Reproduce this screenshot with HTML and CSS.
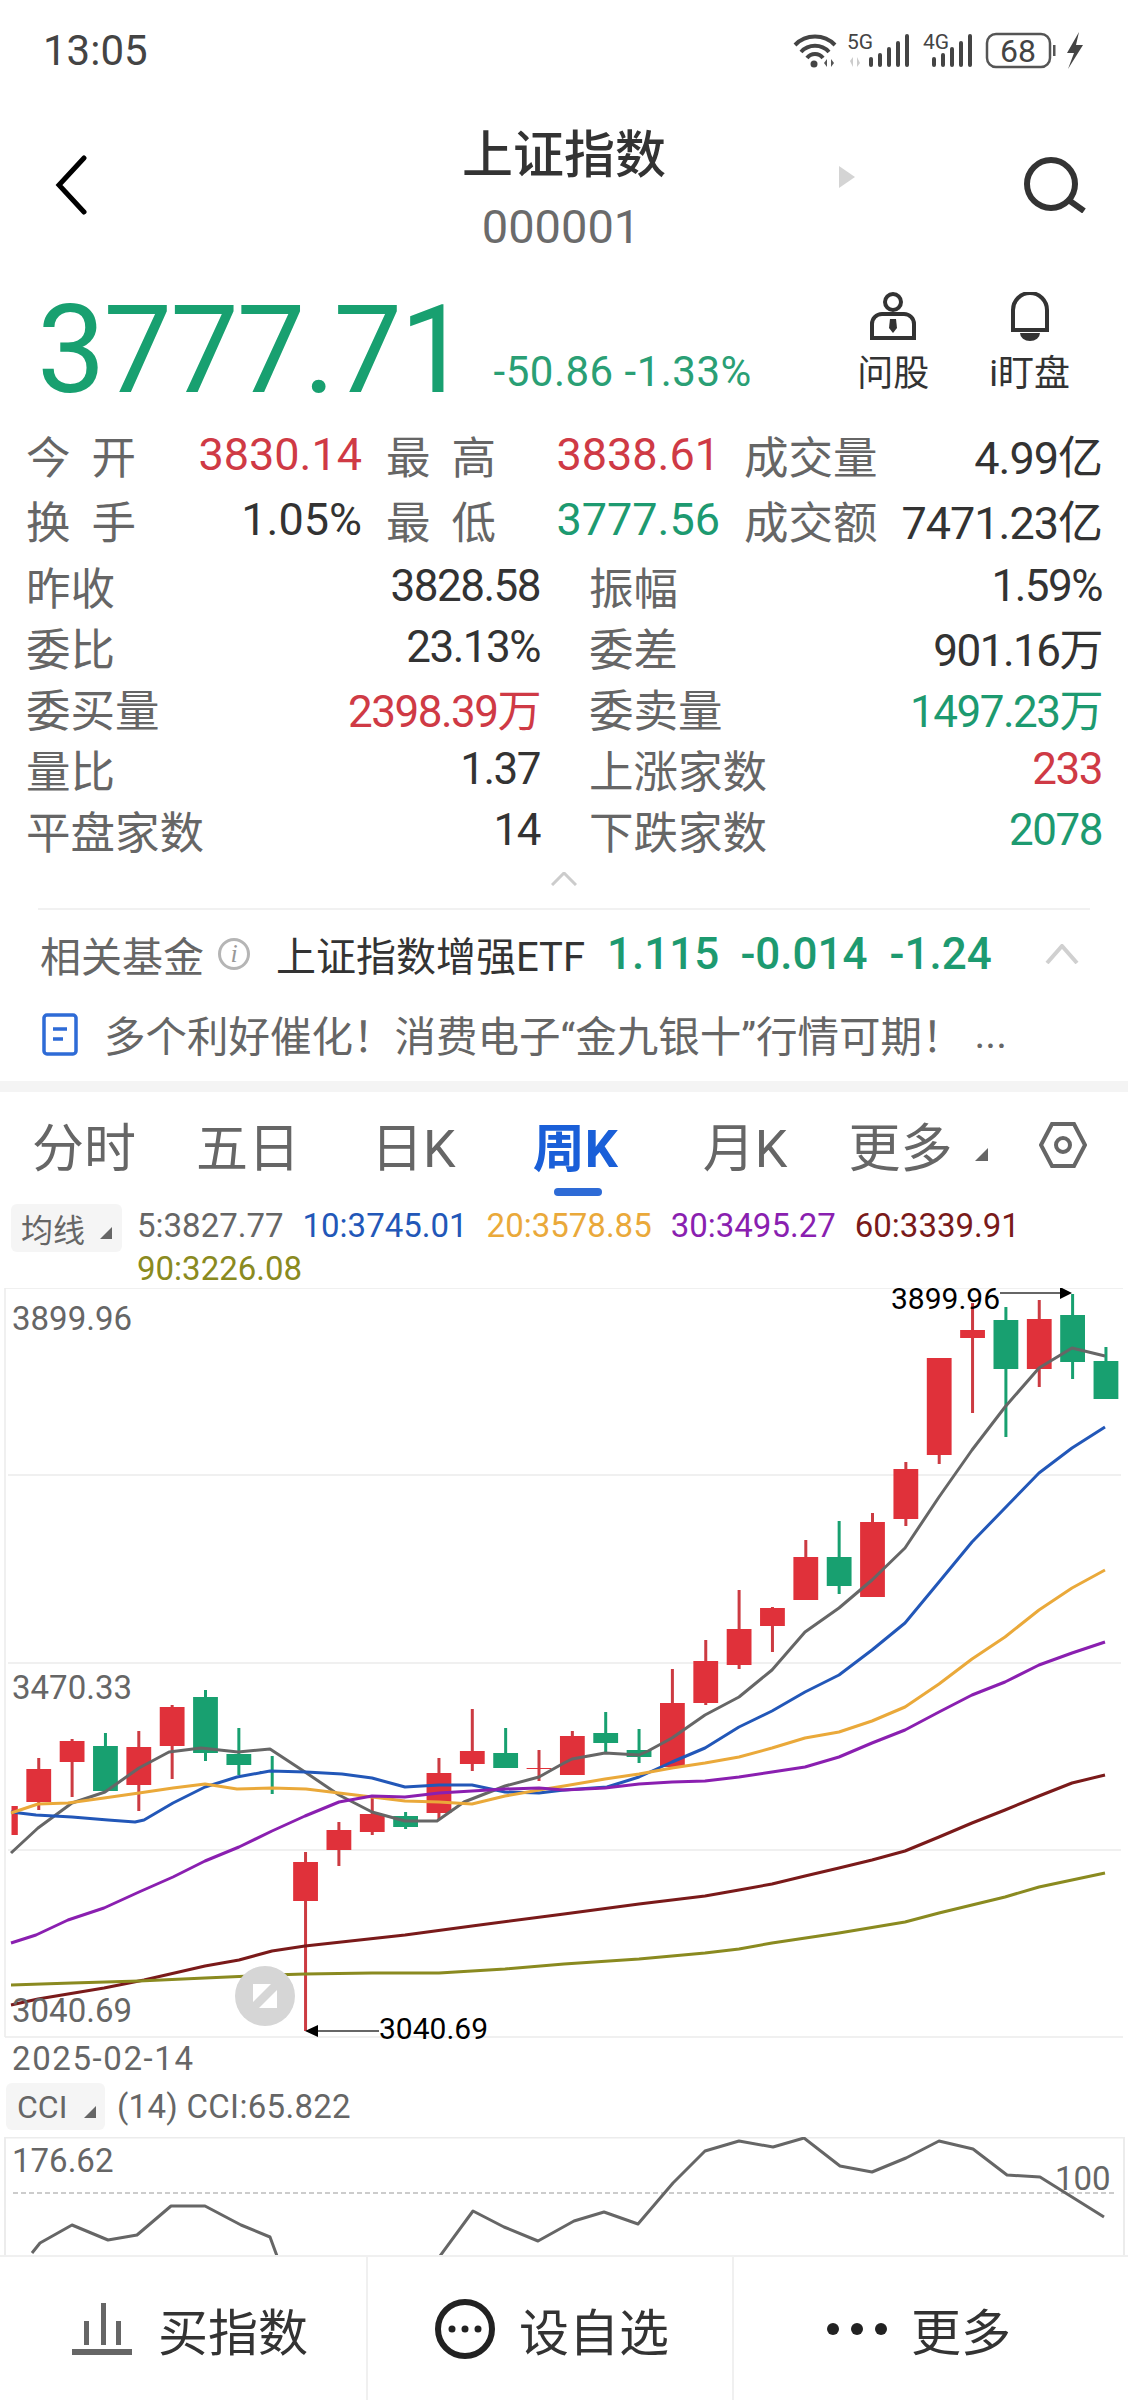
FILE: index.html
```html
<!DOCTYPE html>
<html lang="zh-CN">
<head>
    <meta charset="UTF-8">
    <meta name="viewport" content="width=device-width, initial-scale=1.0">
    <title>上证指数</title>
    <link rel="stylesheet" href="styles.css">
</head>
<body>
    <div class="status-bar">
        <span class="status-time">13:05</span>
        <svg class="status-icons" viewBox="795 30 292 38">
            <g fill="none" stroke="#444" stroke-width="4">
                <path d="M797 44a28 28 0 0 1 40 0"/>
                <path d="M803 51a19 19 0 0 1 28 0"/>
                <path d="M809 57a10 10 0 0 1 16 0"/>
            </g>
            <circle cx="816" cy="63" r="3.5" fill="#444"/>
            <path d="M829 66v-8l-3 4zM833 58v8l3-4z" fill="#555"/>
            <text class="net-label" x="849" y="48">5G</text>
            <path d="M855 66v-10l-3 4zM859 56v10l3-4z" fill="#ccc"/>
            <g fill="#444">
                <rect x="871" y="56" width="4" height="10" rx="2"/>
                <rect x="880" y="52" width="4" height="14" rx="2"/>
                <rect x="889" y="46" width="4" height="20" rx="2"/>
                <rect x="898" y="40" width="4" height="26" rx="2"/>
                <rect x="907" y="33" width="4" height="33" rx="2"/>
            </g>
            <text class="net-label" x="925" y="48">4G</text>
            <g fill="#444">
                <rect x="934" y="56" width="4" height="10" rx="2"/>
                <rect x="943" y="52" width="4" height="14" rx="2"/>
                <rect x="952" y="46" width="4" height="20" rx="2"/>
                <rect x="961" y="40" width="4" height="26" rx="2"/>
                <rect x="970" y="33" width="4" height="33" rx="2"/>
            </g>
            <rect x="989" y="33" width="63" height="33" rx="9" fill="none" stroke="#555" stroke-width="2.5"/>
            <text class="battery-label" x="1020" y="61" text-anchor="middle">68</text>
            <rect x="1055" y="44" width="2.5" height="11" fill="#555"/>
            <path d="M1081 31l-12 21h7l-6 16 15-24h-7z" fill="#444"/>
        </svg>
    </div>

    <div class="nav">
        <div class="nav-left">
            <svg class="icon-back" viewBox="0 0 34 60"><path d="M30 3L5 30l25 27"/></svg>
        </div>
        <div class="nav-title">
            <h1>上证指数</h1>
            <div class="nav-code">000001</div>
        </div>
        <div class="nav-right">
            <svg class="icon-next" viewBox="0 0 16 22"><path d="M0 0l16 11L0 22z"/></svg>
            <svg class="icon-search" viewBox="0 0 64 56"><circle cx="27" cy="27" r="24"/><path d="M46 44l14 10"/></svg>
        </div>
    </div>

    <div class="quote">
        <div class="quote-price">3777.71</div>
        <div class="quote-change">-50.86 -1.33%</div>
        <div class="quote-actions">
            <div class="action">
                <svg class="action-icon" viewBox="0 0 50 50">
                    <circle cx="25" cy="10" r="8"/>
                    <path d="M4 46V32a10 10 0 0 1 10-10h22a10 10 0 0 1 10 10v14z"/>
                    <path class="tie" d="M22 27h6l1 9-4 5-4-5z"/>
                </svg>
                <span>问股</span>
            </div>
            <div class="action">
                <svg class="action-icon" viewBox="0 0 50 50">
                    <path d="M8 38V18a17 17 0 0 1 34 0v20z"/>
                    <path class="tie" d="M15 41h20a10 8 0 0 1-20 0z"/>
                </svg>
                <span>i盯盘</span>
            </div>
        </div>
    </div>

    <div class="stats-top">
        <div class="stat"><span class="stat-label spaced"><i>今</i><i>开</i></span><span class="stat-value up">3830.14</span></div>
        <div class="stat"><span class="stat-label spaced"><i>最</i><i>高</i></span><span class="stat-value up">3838.61</span></div>
        <div class="stat"><span class="stat-label">成交量</span><span class="stat-value tight">4.99亿</span></div>
        <div class="stat"><span class="stat-label spaced"><i>换</i><i>手</i></span><span class="stat-value">1.05%</span></div>
        <div class="stat"><span class="stat-label spaced"><i>最</i><i>低</i></span><span class="stat-value down">3777.56</span></div>
        <div class="stat"><span class="stat-label">成交额</span><span class="stat-value tight">7471.23亿</span></div>
    </div>
    <div class="stats-list">
        <div class="stat"><span class="stat-label">昨收</span><span class="stat-value">3828.58</span></div>
        <div class="stat"><span class="stat-label">振幅</span><span class="stat-value">1.59%</span></div>
        <div class="stat"><span class="stat-label">委比</span><span class="stat-value">23.13%</span></div>
        <div class="stat"><span class="stat-label">委差</span><span class="stat-value">901.16万</span></div>
        <div class="stat"><span class="stat-label">委买量</span><span class="stat-value up">2398.39万</span></div>
        <div class="stat"><span class="stat-label">委卖量</span><span class="stat-value down">1497.23万</span></div>
        <div class="stat"><span class="stat-label">量比</span><span class="stat-value">1.37</span></div>
        <div class="stat"><span class="stat-label">上涨家数</span><span class="stat-value up">233</span></div>
        <div class="stat"><span class="stat-label">平盘家数</span><span class="stat-value">14</span></div>
        <div class="stat"><span class="stat-label">下跌家数</span><span class="stat-value down">2078</span></div>
    </div>

    <div class="collapse">
        <svg viewBox="0 0 26 14"><path d="M1 13L13 1l12 12"/></svg>
    </div>

    <div class="fund-row">
        <span class="fund-title">相关基金</span>
        <span class="fund-info">i</span>
        <span class="fund-name">上证指数增强ETF</span>
        <span class="fund-num fund-price">1.115</span>
        <span class="fund-num fund-diff">-0.014</span>
        <span class="fund-num fund-pct">-1.24</span>
        <svg class="fund-toggle" viewBox="0 0 34 20"><path d="M2 19L17 2l15 17"/></svg>
    </div>
    <div class="news-row">
        <svg class="news-icon" viewBox="0 0 36 43">
            <rect x="2" y="2" width="32" height="39" rx="3"/>
            <path d="M11 16h14M11 26h10"/>
        </svg>
        <span class="news-text">多个利好催化！消费电子“金九银十”行情可期！</span>
        <span class="news-more">...</span>
    </div>
    <div class="band"></div>

    <div class="tabs">
        <span class="tab tab-fs">分时</span>
        <span class="tab tab-wr">五日</span>
        <span class="tab tab-rk">日K</span>
        <span class="tab tab-zk active">周K</span>
        <span class="tab tab-yk">月K</span>
        <span class="tab tab-more">更多</span>
        <span class="corner tab-corner"></span>
        <svg class="tab-settings" viewBox="0 0 48 46">
            <path d="M13 2h22l11 21-11 21H13L2 23z"/>
            <circle cx="24" cy="23" r="7"/>
        </svg>
    </div>

    <div class="ma-row">
        <div class="picker ma-picker">均线<span class="corner"></span></div>
        <div class="ma-values">
            <span class="ma ma5">5:3827.77</span>
            <span class="ma ma10">10:3745.01</span>
            <span class="ma ma20">20:3578.85</span>
            <span class="ma ma30">30:3495.27</span>
            <span class="ma ma60">60:3339.91</span>
            <span class="ma ma90">90:3226.08</span>
        </div>
    </div>

    <div class="kline">
        <svg class="kline-svg" viewBox="0 1288 1128 750">
            <g class="grid">
                <path d="M5 1288v749M5 1288H1123M5 2037H1123"/>
                <path d="M8 1475H1121M8 1663H1121M8 1850H1121"/>
            </g>
            <g id="candles"></g>
            <g id="ma-lines"></g>
            <path class="callout-line" d="M1000 1293h60M318 2031h61"/>
            <path d="M1072 1293l-12-6v12zM305 2031l13-6v12z"/>
        </svg>
        <span class="axis-label axis-high">3899.96</span>
        <span class="axis-label axis-mid">3470.33</span>
        <span class="axis-label axis-low">3040.69</span>
        <span class="callout callout-high">3899.96</span>
        <span class="callout callout-low">3040.69</span>
        <svg class="expand" viewBox="0 0 60 60">
            <circle cx="30" cy="30" r="30"/>
            <path class="expand-mark" d="M18 18h18L18 36zM42 42H24l18-18z"/>
        </svg>
    </div>

    <div class="date-row">2025-02-14</div>

    <div class="cci-row">
        <div class="picker cci-picker">CCI<span class="corner"></span></div>
        <span class="cci-value">(14) CCI:65.822</span>
    </div>

    <div class="cci-panel">
        <svg class="cci-svg" viewBox="0 2137 1128 118">
            <path class="cci-frame" d="M5 2255V2137.5H1124V2255"/>
            <path class="cci-dash" d="M13 2193H1117"/>
            <polyline class="cci-line" points="32,2253 40,2243 72,2225 108,2240 137,2235 171,2206 205,2206 241,2225 270,2237 277,2256"/>
            <polyline class="cci-line" points="440,2256 473,2211 504,2227 538,2241 574,2221 604,2212 638,2224 673,2183 705,2151 739,2141 773,2147 804,2138 840,2166 872,2172 906,2158 939,2141 973,2149 1007,2175 1040,2177 1072,2197 1104,2217"/>
        </svg>
        <span class="axis-label cci-top">176.62</span>
        <span class="axis-label cci-hundred">100</span>
    </div>

    <div class="bottom-bar">
        <div class="bottom-item item-buy">
            <svg class="bottom-icon" viewBox="0 0 60 56">
                <path class="bar-fill" d="M12 20h5v24h-5zM29 2h5v42h-5zM44 20h5v24h-5zM0 48h60v6H0z"/>
            </svg>
            <span>买指数</span>
        </div>
        <div class="bottom-item item-watch">
            <svg class="bottom-icon" viewBox="0 0 60 60">
                <circle class="ring" cx="30" cy="30" r="27"/>
                <circle cx="17" cy="30" r="3.5"/><circle cx="30" cy="30" r="3.5"/><circle cx="43" cy="30" r="3.5"/>
            </svg>
            <span>设自选</span>
        </div>
        <div class="bottom-item item-more">
            <svg class="bottom-icon" viewBox="0 0 60 14">
                <circle cx="6" cy="7" r="6"/><circle cx="30" cy="7" r="6"/><circle cx="54" cy="7" r="6"/>
            </svg>
            <span>更多</span>
        </div>
    </div>

    <script src="chart.js"></script>
</body>
</html>
```

FILE: styles.css
```css
* {
    box-sizing: border-box;
}
body {
    margin: 0;
    width: 1128px;
    height: 2400px;
    overflow: hidden;
    background-color: #fff;
    color: #333;
    font-family: Roboto, "Noto Sans CJK SC", sans-serif;
}
i {
    font-style: normal;
}
svg {
    display: block;
}
.up {
    color: #cf3a45;
}
.down {
    color: #1d9a70;
}

/* status bar */
.status-bar {
    display: flex;
    justify-content: space-between;
    align-items: center;
    height: 100px;
    padding: 0 43px;
}
.status-time {
    font-size: 42px;
    color: #444;
}
.status-icons {
    width: 292px;
    height: 38px;
}
.net-label {
    font-size: 21px;
    fill: #444;
}
.battery-label {
    font-size: 32px;
    fill: #444;
}

/* nav */
.nav {
    display: grid;
    grid-template-columns: 1fr auto 1fr;
    height: 183px;
}
.nav-left {
    padding: 55px 0 0 54px;
}
.icon-back {
    width: 34px;
    height: 60px;
    fill: none;
    stroke: #000;
    stroke-width: 5;
    stroke-linecap: round;
}
.nav-title {
    text-align: center;
}
.nav-title h1 {
    margin: 26px 0 0;
    font-size: 51px;
    line-height: 60px;
    font-weight: 500;
    color: #333;
}
.nav-code {
    margin-top: 14px;
    padding-right: 6px;
    font-size: 47px;
    line-height: 54px;
    color: #6b6b6b;
}
.nav-right {
    display: flex;
    justify-content: space-between;
    padding: 57px 40px 0 173px;
}
.icon-next {
    width: 16px;
    height: 22px;
    margin-top: 9px;
    fill: #d4d4d4;
}
.icon-search {
    width: 64px;
    height: 56px;
    fill: none;
    stroke: #333;
    stroke-width: 6;
}

/* quote */
.quote {
    display: flex;
    align-items: flex-end;
    height: 137px;
    padding: 0 58px 0 37px;
}
.quote-price {
    font-size: 122px;
    line-height: 122px;
    letter-spacing: -2px;
    color: #18a070;
    margin-bottom: 8px;
}
.quote-change {
    margin: 0 0 25px 27px;
    font-size: 42px;
    line-height: 46px;
    letter-spacing: 0.5px;
    color: #2a9f75;
}
.quote-actions {
    display: flex;
    gap: 60px;
    margin-left: auto;
    margin-bottom: 24px;
}
.action {
    display: flex;
    flex-direction: column;
    align-items: center;
    font-size: 36px;
    line-height: 44px;
    color: #333;
}
.action-icon {
    width: 50px;
    height: 50px;
    margin-bottom: 10px;
    fill: none;
    stroke: #333;
    stroke-width: 4;
}
.action-icon .tie {
    fill: #333;
    stroke: none;
}

/* stats */
.stat {
    display: flex;
    justify-content: space-between;
    align-items: center;
}
.stat-label {
    color: #666;
    font-size: 44.5px;
}
.stat-label.spaced {
    display: flex;
    justify-content: space-between;
    width: 110px;
}
.stat-value {
    font-size: 45px;
}
.stat-value.tight {
    letter-spacing: -1px;
}
.stats-top {
    display: grid;
    grid-template-columns: 336px 334px 358px;
    column-gap: 24px;
    grid-auto-rows: 65px;
    margin-top: 2px;
    padding-left: 26px;
}
.stats-list {
    display: grid;
    grid-template-columns: 514px 513px;
    column-gap: 49px;
    grid-auto-rows: 61px;
    margin-top: 3px;
    padding-left: 26px;
}
.stats-list .stat-value {
    font-size: 44px;
    letter-spacing: -1.5px;
}

.collapse {
    display: flex;
    justify-content: center;
    height: 50px;
    padding-top: 12px;
    border-bottom: 2px solid #f1f1f1;
    margin: 0 38px;
}
.collapse svg {
    width: 26px;
    height: 14px;
    fill: none;
    stroke: #ccc;
    stroke-width: 3;
}

/* fund and news */
.fund-row {
    display: flex;
    align-items: center;
    height: 88px;
    padding: 0 49px 0 40px;
}
.fund-title {
    font-size: 41px;
    color: #666;
}
.fund-info {
    display: flex;
    justify-content: center;
    align-items: center;
    width: 32px;
    height: 32px;
    margin-left: 14px;
    border: 3px solid #b5b5b5;
    border-radius: 50%;
    font-family: "Liberation Serif", serif;
    font-style: italic;
    font-size: 26px;
    color: #999;
}
.fund-name {
    margin-left: 26px;
    font-size: 40px;
    color: #333;
}
.fund-num {
    font-size: 44px;
    font-weight: 500;
    color: #1d9a70;
}
.fund-price {
    margin-left: 22px;
}
.fund-diff {
    margin-left: 21px;
}
.fund-pct {
    margin-left: 22px;
}
.fund-toggle {
    width: 34px;
    height: 20px;
    margin-left: auto;
    fill: none;
    stroke: #d0d0d0;
    stroke-width: 4;
}
.news-row {
    display: flex;
    align-items: center;
    height: 72px;
    padding-left: 42px;
}
.news-icon {
    width: 36px;
    height: 43px;
    fill: none;
    stroke: #2e6bd6;
    stroke-width: 3.5;
}
.news-text {
    margin-left: 26px;
    font-size: 41.5px;
    color: #666;
    white-space: nowrap;
}
.news-more {
    margin-left: 11px;
    font-size: 41px;
    color: #666;
}
.band {
    height: 11px;
    margin-top: 11px;
    background-color: #f4f4f4;
}

/* period tabs */
.tabs {
    position: relative;
    height: 101px;
    display: flex;
    align-items: center;
    padding-top: 4px;
}
.tab {
    position: relative;
    font-size: 52px;
    color: #666;
}
.tab-fs {
    margin-left: 32px;
}
.tab-wr {
    margin-left: 60px;
}
.tab-rk {
    margin-left: 71px;
}
.tab-zk {
    margin-left: 77px;
}
.tab-yk {
    margin-left: 85px;
}
.tab-more {
    margin-left: 61px;
}
.tab.active {
    color: #1a5fd8;
    font-weight: 700;
}
.tab.active::after {
    content: "";
    position: absolute;
    left: 21px;
    bottom: -14px;
    width: 48px;
    height: 8px;
    border-radius: 4px;
    background-color: #2e6bd6;
}
.corner {
    display: inline-block;
    width: 0;
    height: 0;
    border-style: solid;
    border-width: 0 0 13px 13px;
    border-color: transparent transparent #666 transparent;
}
.tab-corner {
    margin: 20px 0 0 23px;
}
.tab-settings {
    width: 48px;
    height: 46px;
    margin-left: 51px;
    fill: none;
    stroke: #666;
    stroke-width: 4;
}

/* moving averages */
.ma-row {
    display: flex;
    align-items: flex-start;
    height: 95px;
    padding: 11px 0 0 11px;
}
.picker {
    display: flex;
    align-items: center;
    justify-content: space-between;
    background-color: #f5f5f5;
    border-radius: 6px;
    color: #666;
    font-size: 32px;
}
.picker .corner {
    border-width: 0 0 12px 12px;
    margin-top: 10px;
}
.ma-picker {
    width: 111px;
    height: 48px;
    padding: 0 10px;
}
.ma-values {
    display: flex;
    flex-wrap: wrap;
    column-gap: 19px;
    margin-left: 15px;
    width: 960px;
    font-size: 33px;
    line-height: 43px;
}
.ma5 { color: #666; }
.ma10 { color: #2257b8; }
.ma20 { color: #eaa93a; }
.ma30 { color: #8a1fb0; }
.ma60 { color: #7a1a1a; }
.ma90 { color: #8a8a20; }

/* kline chart */
.kline {
    position: relative;
    height: 750px;
}
.kline-svg {
    width: 1128px;
    height: 750px;
}
.grid path {
    fill: none;
    stroke: #ececec;
    stroke-width: 1.5;
}
.callout-line {
    stroke: #666;
    stroke-width: 2;
}
.axis-label {
    position: absolute;
    left: 12px;
    font-size: 33px;
    line-height: 34px;
    color: #666;
}
.axis-high { top: 14px; }
.axis-mid { top: 383px; }
.axis-low { top: 706px; }
.callout {
    position: absolute;
    font-size: 30px;
    line-height: 34px;
    color: #000;
}
.callout-high {
    left: 891px;
    top: -6px;
}
.callout-low {
    left: 379px;
    top: 724px;
}
.expand {
    position: absolute;
    left: 235px;
    top: 678px;
    width: 60px;
    height: 60px;
    fill: #d6d6d6;
}
.expand-mark {
    fill: #fff;
}

.date-row {
    height: 45px;
    padding: 2px 0 0 12px;
    font-size: 33px;
    line-height: 38px;
    letter-spacing: 1.6px;
    color: #666;
}
.cci-row {
    display: flex;
    align-items: flex-start;
    height: 54px;
    padding-left: 6px;
}
.cci-picker {
    width: 99px;
    height: 47px;
    padding: 0 9px 0 11px;
}
.cci-value {
    margin-left: 12px;
    font-size: 33px;
    line-height: 47px;
    letter-spacing: 0.3px;
    color: #666;
}
.cci-panel {
    position: relative;
    height: 118px;
}
.cci-svg {
    width: 1128px;
    height: 118px;
}
.cci-frame {
    fill: none;
    stroke: #ececec;
    stroke-width: 2;
}
.cci-dash {
    stroke: #ccc;
    stroke-width: 2;
    stroke-dasharray: 5 3;
}
.cci-line {
    fill: none;
    stroke: #666;
    stroke-width: 3;
    stroke-linejoin: round;
}
.cci-top {
    top: 7px;
    font-size: 33px;
}
.cci-hundred {
    left: 1055px;
    top: 25px;
}

/* bottom bar */
.bottom-bar {
    display: grid;
    grid-template-columns: 366px 366px 396px;
    height: 145px;
    background-color: #fff;
    border-top: 2px solid #f0f0f0;
}
.bottom-item {
    display: flex;
    align-items: center;
    gap: 24px;
    font-size: 50px;
    color: #333;
    border-left: 2px solid #f0f0f0;
}
.item-buy {
    gap: 26px;
    padding-left: 72px;
    border-left: none;
}
.item-watch {
    padding-left: 67px;
}
.item-more {
    padding-left: 93px;
}
.bottom-icon {
    width: 60px;
    height: auto;
    fill: #222;
}
.bar-fill {
    fill: #666;
}
.ring {
    fill: none;
    stroke: #222;
    stroke-width: 6;
}
```

FILE: chart.js
```js
const RED = '#e0313a';
const RED_WICK = '#cc3b42';
const GREEN = '#18a070';

// [color, bodyTop, bodyBottom, wickTop, wickBottom], one per week, page y coords
const candles = [
    ['r', 1806, 1835, 1800, 1835], ['r', 1769, 1802, 1758, 1810], ['r', 1741, 1762, 1739, 1797],
    ['g', 1746, 1791, 1733, 1791], ['r', 1747, 1785, 1731, 1811], ['r', 1707, 1746, 1705, 1779],
    ['g', 1697, 1753, 1690, 1761], ['g', 1754, 1765, 1728, 1775], ['g', 1771, 1772, 1756, 1794],
    ['r', 1862, 1901, 1852, 2031], ['r', 1830, 1850, 1822, 1866], ['r', 1814, 1832, 1797, 1835],
    ['g', 1816, 1827, 1812, 1829], ['r', 1773, 1813, 1758, 1820], ['r', 1751, 1764, 1709, 1771],
    ['g', 1753, 1768, 1728, 1768], ['r', 1768, 1769, 1750, 1781], ['r', 1736, 1775, 1731, 1775],
    ['g', 1733, 1743, 1712, 1753], ['g', 1750, 1757, 1729, 1763], ['r', 1703, 1767, 1669, 1767],
    ['r', 1661, 1703, 1640, 1705], ['r', 1629, 1665, 1590, 1669], ['r', 1608, 1626, 1607, 1652],
    ['r', 1557, 1600, 1540, 1600], ['g', 1557, 1586, 1521, 1594], ['r', 1522, 1597, 1513, 1597],
    ['r', 1469, 1519, 1462, 1526], ['r', 1358, 1455, 1358, 1464], ['r', 1330, 1338, 1303, 1413],
    ['g', 1320, 1369, 1307, 1437], ['r', 1319, 1369, 1300, 1387], ['g', 1315, 1362, 1294, 1379],
    ['g', 1361, 1399, 1347, 1361]
];

const lines = [
    ['#666666', '11,1853 38,1828 72,1803 105,1792 139,1768 169,1752 201,1748 238,1752 270,1749 305,1772 339,1795 372,1812 405,1821 437,1821 464,1802 505,1786 539,1777 564,1763 572,1759 605,1753 639,1755 648,1751 672,1738 705,1715 739,1697 772,1670 805,1632 839,1608 872,1580 905,1548 939,1497 972,1450 1005,1407 1039,1368 1072,1348 1105,1356'],
    ['#2257b8', '11,1812 36,1815 72,1817 108,1820 135,1822 144,1820 173,1803 205,1787 237,1777 270,1771 306,1772 342,1774 372,1778 405,1787 439,1785 472,1785 505,1792 539,1793 564,1790 607,1787 639,1777 672,1762 705,1748 739,1727 772,1711 805,1692 839,1675 872,1650 905,1623 939,1582 972,1542 1005,1508 1039,1473 1072,1448 1105,1427'],
    ['#eaa93a', '11,1813 38,1804 68,1803 104,1798 139,1793 173,1788 205,1784 237,1789 272,1788 306,1789 339,1793 372,1797 405,1801 439,1802 472,1804 505,1796 539,1790 564,1786 605,1779 639,1774 672,1768 705,1763 739,1757 772,1748 805,1738 839,1732 872,1721 905,1707 939,1684 972,1659 1005,1637 1039,1610 1072,1588 1105,1570'],
    ['#8a1fb0', '11,1943 36,1935 68,1920 104,1908 139,1892 173,1877 205,1861 239,1847 272,1831 305,1816 339,1802 372,1796 405,1797 439,1793 472,1791 505,1789 539,1788 564,1790 605,1788 639,1784 672,1782 705,1781 739,1777 772,1772 805,1767 839,1757 872,1743 905,1730 939,1712 972,1695 1005,1682 1039,1665 1072,1653 1105,1642'],
    ['#7a1a1a', '11,2005 38,1999 104,1988 144,1980 205,1966 239,1960 272,1951 305,1946 405,1935 472,1926 564,1914 639,1904 705,1896 739,1890 772,1884 805,1876 839,1868 872,1860 905,1851 939,1837 972,1823 1005,1810 1039,1796 1072,1783 1105,1775'],
    ['#8a8a20', '11,1985 72,1983 139,1981 205,1978 272,1975 305,1974 372,1973 439,1973 505,1969 564,1964 639,1959 705,1953 739,1949 772,1943 839,1933 905,1922 939,1913 1005,1897 1039,1887 1105,1873']
];

function drawCandles() {
    let html = '';
    candles.forEach((c, i) => {
        const x = 5.4 + i * 33.35;
        const left = Math.max(x - 12.4, 11.5);
        const body = c[0] === 'r' ? RED : GREEN;
        const wick = c[0] === 'r' ? RED_WICK : GREEN;
        if (i > 0) {
            html += `<rect x="${x - 1.5}" y="${c[3]}" width="3" height="${c[4] - c[3]}" fill="${wick}"/>`;
        }
        html += `<rect x="${left}" y="${c[1]}" width="${x + 12.4 - left}" height="${c[2] - c[1]}" fill="${body}"/>`;
    });
    document.getElementById('candles').innerHTML = html;
}

function drawLines() {
    document.getElementById('ma-lines').innerHTML = lines.map(l =>
        `<polyline points="${l[1]}" fill="none" stroke="${l[0]}" stroke-width="3" stroke-linejoin="round"/>`
    ).join('');
}

drawCandles();
drawLines();
```
